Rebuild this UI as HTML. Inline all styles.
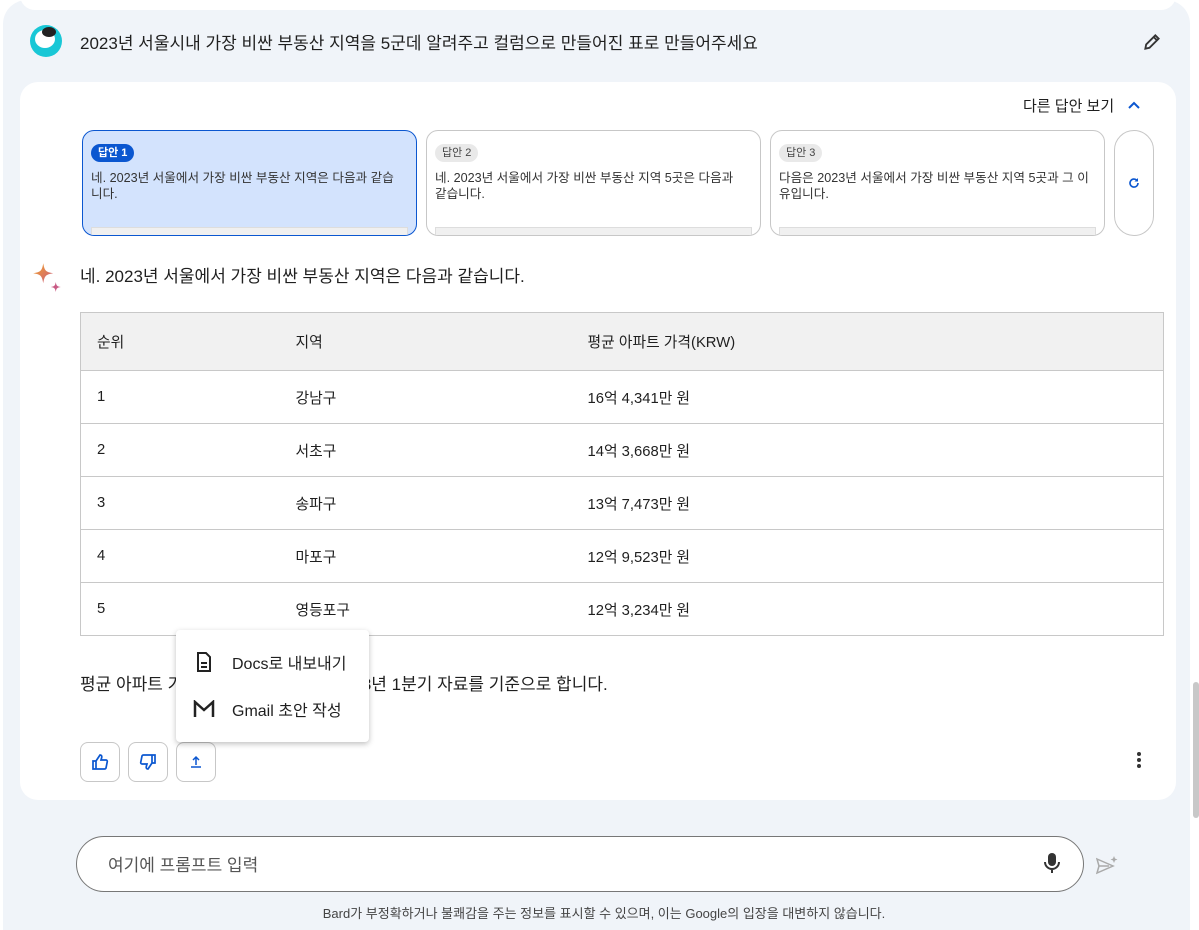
<!DOCTYPE html>
<html><head><meta charset="utf-8"><style>
*{box-sizing:border-box;margin:0;padding:0}
body{width:1199px;height:918px;overflow:hidden;background:#fff;font-family:"Liberation Sans","Noto Sans CJK KR",sans-serif;color:#1f1f1f;position:relative}
.bg{position:absolute;left:3px;top:0;width:1187px;height:930px;background:#f0f4f9;border-radius:24px 24px 0 0}
.topcard{position:absolute;left:20px;top:-20px;width:1156px;height:30px;background:#fff;border-radius:16px}
.abs{position:absolute;white-space:nowrap}
.card{position:absolute;left:20px;top:82px;width:1156px;height:718px;background:#fff;border-radius:18px}
.draft{position:absolute;top:130px;width:335px;height:106px;border:1px solid #c7c7c7;border-radius:12px;background:#fff;overflow:hidden}
.draft.sel{background:#d3e3fd;border-color:#0b57d0}
.draft .tag{position:absolute;left:8px;top:13px;height:18px;padding:0 7px;border-radius:9px;background:#e9e9e9;color:#444;font-size:11px;line-height:18px}
.draft.sel .tag{background:#0b57d0;color:#fff;font-weight:bold}
.draft .t{position:absolute;left:8px;top:39px;right:14px;font-size:12.6px;line-height:16px;color:#333}
.draft .bar{position:absolute;left:8px;right:8px;bottom:0;height:8px;background:#f0f0f0;border:1px solid #ddd;border-bottom:none}
table{position:absolute;left:80px;top:312px;width:1084px;border-collapse:collapse;border:1px solid #c8c8c8;font-size:14.8px}
td{height:53px;border-top:1px solid #c8c8c8;padding-left:16px;color:#1f1f1f}
tr:first-child td{height:58px;background:#f1f1f1;border-top:none}
.btn{position:absolute;top:742px;width:40px;height:40px;border:1px solid #c7c7c7;border-radius:8px;display:flex;align-items:center;justify-content:center}
.menu{position:absolute;left:176px;top:630px;width:193px;height:112px;background:#fff;border-radius:4px;box-shadow:0 2px 6px rgba(0,0,0,.25)}
.menu div{position:absolute;left:56px;font-size:16px;color:#1f1f1f;white-space:nowrap}
</style></head><body>
<div class="bg"></div>
<div class="topcard"></div>
<div class="abs" style="left:30px;top:25px;width:32px;height:32px;border-radius:50%;background:#19c7d6;overflow:hidden"><div style="position:absolute;left:5px;top:5px;width:20px;height:18px;border-radius:50%;background:#fff"></div><div style="position:absolute;left:12px;top:2px;width:14px;height:10px;border-radius:50%;background:#222"></div></div>
<div class="abs" style="left:80px;top:29px;font-size:17px">2023년 서울시내 가장 비싼 부동산 지역을 5군데 알려주고 컬럼으로 만들어진 표로 만들어주세요</div>
<svg class="abs" style="left:1142px;top:32px" width="20" height="20" viewBox="0 0 24 24"><path d="M4 20l1-5L16 4l4 4L9 19z M14 6l4 4" fill="none" stroke="#333" stroke-width="2.2"/></svg>
<div class="card"></div>
<div class="abs" style="left:1023px;top:95px;font-size:15px">다른 답안 보기</div>
<svg class="abs" style="left:1126px;top:97px" width="16" height="16" viewBox="0 0 16 16"><path d="M3 11l5-5 5 5" fill="none" stroke="#0b57d0" stroke-width="2"/></svg>
<div class="draft sel" style="left:82px"><span class="tag">답안 1</span><div class="t">네. 2023년 서울에서 가장 비싼 부동산 지역은 다음과 같습니다.</div><div class="bar"></div></div>
<div class="draft" style="left:426px"><span class="tag">답안 2</span><div class="t">네. 2023년 서울에서 가장 비싼 부동산 지역 5곳은 다음과 같습니다.</div><div class="bar"></div></div>
<div class="draft" style="left:770px"><span class="tag">답안 3</span><div class="t">다음은 2023년 서울에서 가장 비싼 부동산 지역 5곳과 그 이유입니다.</div><div class="bar"></div></div>
<div class="abs" style="left:1114px;top:130px;width:40px;height:106px;border:1px solid #c7c7c7;border-radius:20px"></div>
<svg class="abs" style="left:1127px;top:176px" width="14" height="14" viewBox="0 0 14 14"><path d="M11 7a4 4 0 1 1-1.2-2.8" fill="none" stroke="#0b57d0" stroke-width="1.6"/><path d="M11 2v3.5H7.5z" fill="#0b57d0"/></svg>
<svg class="abs" style="left:32px;top:262px" width="30" height="30" viewBox="0 0 24 24"><defs><linearGradient id="g" x1="0" y1="0" x2="1" y2="1"><stop offset="0" stop-color="#f4a52a"/><stop offset="1" stop-color="#c85a84"/></linearGradient></defs><path d="M9 1C10 7 11 8 17 9 11 10 10 11 9 17 8 11 7 10 1 9 7 8 8 7 9 1z" fill="url(#g)"/><path d="M19 16c.5 3 1 3.5 4 4-3 .5-3.5 1-4 4-.5-3-1-3.5-4-4 3-.5 3.5-1 4-4z" fill="#c85a84"/></svg>
<div class="abs" style="left:80px;top:262px;font-size:17px">네. 2023년 서울에서 가장 비싼 부동산 지역은 다음과 같습니다.</div>
<table>
<tr><td style="width:199px">순위</td><td style="width:292px">지역</td><td>평균 아파트 가격(KRW)</td></tr>
<tr><td>1</td><td>강남구</td><td>16억 4,341만 원</td></tr>
<tr><td>2</td><td>서초구</td><td>14억 3,668만 원</td></tr>
<tr><td>3</td><td>송파구</td><td>13억 7,473만 원</td></tr>
<tr><td>4</td><td>마포구</td><td>12억 9,523만 원</td></tr>
<tr><td>5</td><td>영등포구</td><td>12억 3,234만 원</td></tr>
</table>
<div class="abs" style="left:80px;top:670px;font-size:17px">평균 아파트 가격은 한국부동산원의 2023년 1분기 자료를 기준으로 합니다.</div>
<div class="btn" style="left:80px"><svg width="18" height="18" viewBox="0 0 18 18"><path d="M2 8h3v8H2z M5 8l4-6c1.5 0 2 1 1.7 2.5L10 7h5c1 0 1.5 1 1.2 2L15 15c-.3.7-.8 1-1.5 1H5" fill="none" stroke="#0b57d0" stroke-width="1.7"/></svg></div>
<div class="btn" style="left:128px"><svg width="18" height="18" viewBox="0 0 18 18" style="transform:rotate(180deg)"><path d="M2 8h3v8H2z M5 8l4-6c1.5 0 2 1 1.7 2.5L10 7h5c1 0 1.5 1 1.2 2L15 15c-.3.7-.8 1-1.5 1H5" fill="none" stroke="#0b57d0" stroke-width="1.7"/></svg></div>
<div class="btn" style="left:176px"><svg width="14" height="14" viewBox="0 0 14 14"><path d="M7 10V2M4 5l3-3 3 3M2 12h10" fill="none" stroke="#0b57d0" stroke-width="1.5"/></svg></div>
<div class="abs" style="left:1137px;top:752px;width:4px;height:4px;border-radius:2px;background:#333;box-shadow:0 6px 0 #333,0 12px 0 #333"></div>
<div class="menu">
<svg class="abs" style="left:20px;top:22px" width="16" height="20" viewBox="0 0 16 20"><path d="M2 1h8l4 4v14H2z" fill="none" stroke="#222" stroke-width="2"/><path d="M5 11h6M5 15h6" stroke="#222" stroke-width="2"/></svg>
<div style="top:20px">Docs로 내보내기</div>
<svg class="abs" style="left:17px;top:70px" width="22" height="18" viewBox="0 0 22 18"><path d="M2 17V2l9 8 9-8v15" fill="none" stroke="#222" stroke-width="2.5"/></svg>
<div style="top:67px">Gmail 초안 작성</div>
</div>
<div class="abs" style="left:76px;top:836px;width:1008px;height:56px;border:1px solid #777;border-radius:28px;background:#fff"></div>
<div class="abs" style="left:108px;top:851px;font-size:17px;color:#555">여기에 프롬프트 입력</div>
<svg class="abs" style="left:1043px;top:852px" width="18" height="22" viewBox="0 0 18 22"><rect x="5" y="1" width="8" height="13" rx="4" fill="#333"/><path d="M2 10a7 7 0 0 0 14 0M9 17v4" fill="none" stroke="#333" stroke-width="2"/></svg>
<svg class="abs" style="left:1096px;top:855px" width="24" height="22" viewBox="0 0 24 22"><path d="M1 4l16 7-16 7 2-7z M3 11h10" fill="none" stroke="#aaa" stroke-width="1.5"/><path d="M18 1l1 2.5 2.5 1-2.5 1-1 2.5-1-2.5-2.5-1 2.5-1z" fill="#aaa"/></svg>
<div class="abs" style="left:0;width:1208px;top:903px;text-align:center;font-size:13px;color:#444">Bard가 부정확하거나 불쾌감을 주는 정보를 표시할 수 있으며, 이는 Google의 입장을 대변하지 않습니다.</div>
<div class="abs" style="left:1193px;top:682px;width:6px;height:136px;background:#c8c8c8;border-radius:3px"></div>
</body></html>
